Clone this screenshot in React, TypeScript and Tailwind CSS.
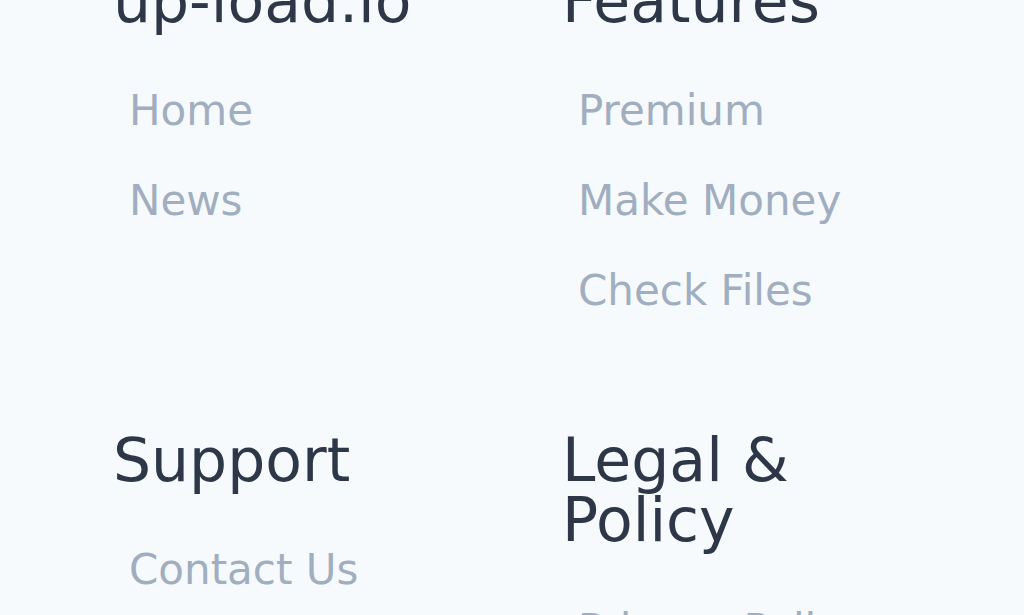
import React from "react";

const sections = [
  { title: "up-load.io", links: ["Home", "News"] },
  { title: "Features", links: ["Premium", "Make Money", "Check Files"] },
  { title: "Support", links: ["Contact Us"] },
  { title: "Legal & Policy", links: ["Privacy Policy", "Terms of Service"] },
];

export default function App() {
  return (
    <div
      className="h-[615px] overflow-hidden bg-[#f7fafc]"
      style={{ fontFamily: '"DejaVu Sans", "Open Sans", sans-serif' }}
    >
      <footer className="mt-[-29px] px-[113px]">
        <div className="grid grid-cols-2 gap-x-[100px] gap-y-[119px]">
          {sections.map((section) => (
            <div key={section.title}>
              <h3 className="text-6xl leading-none font-normal text-[#2d3748]">
                {section.title}
              </h3>
              <ul className="mt-[60px] flex flex-col gap-[50px] pl-4">
                {section.links.map((link) => (
                  <li key={link}>
                    <a
                      href="#"
                      className="block text-[42px] leading-[40px] text-[#a0aec0] hover:text-[#718096]"
                    >
                      {link}
                    </a>
                  </li>
                ))}
              </ul>
            </div>
          ))}
        </div>
      </footer>
    </div>
  );
}
